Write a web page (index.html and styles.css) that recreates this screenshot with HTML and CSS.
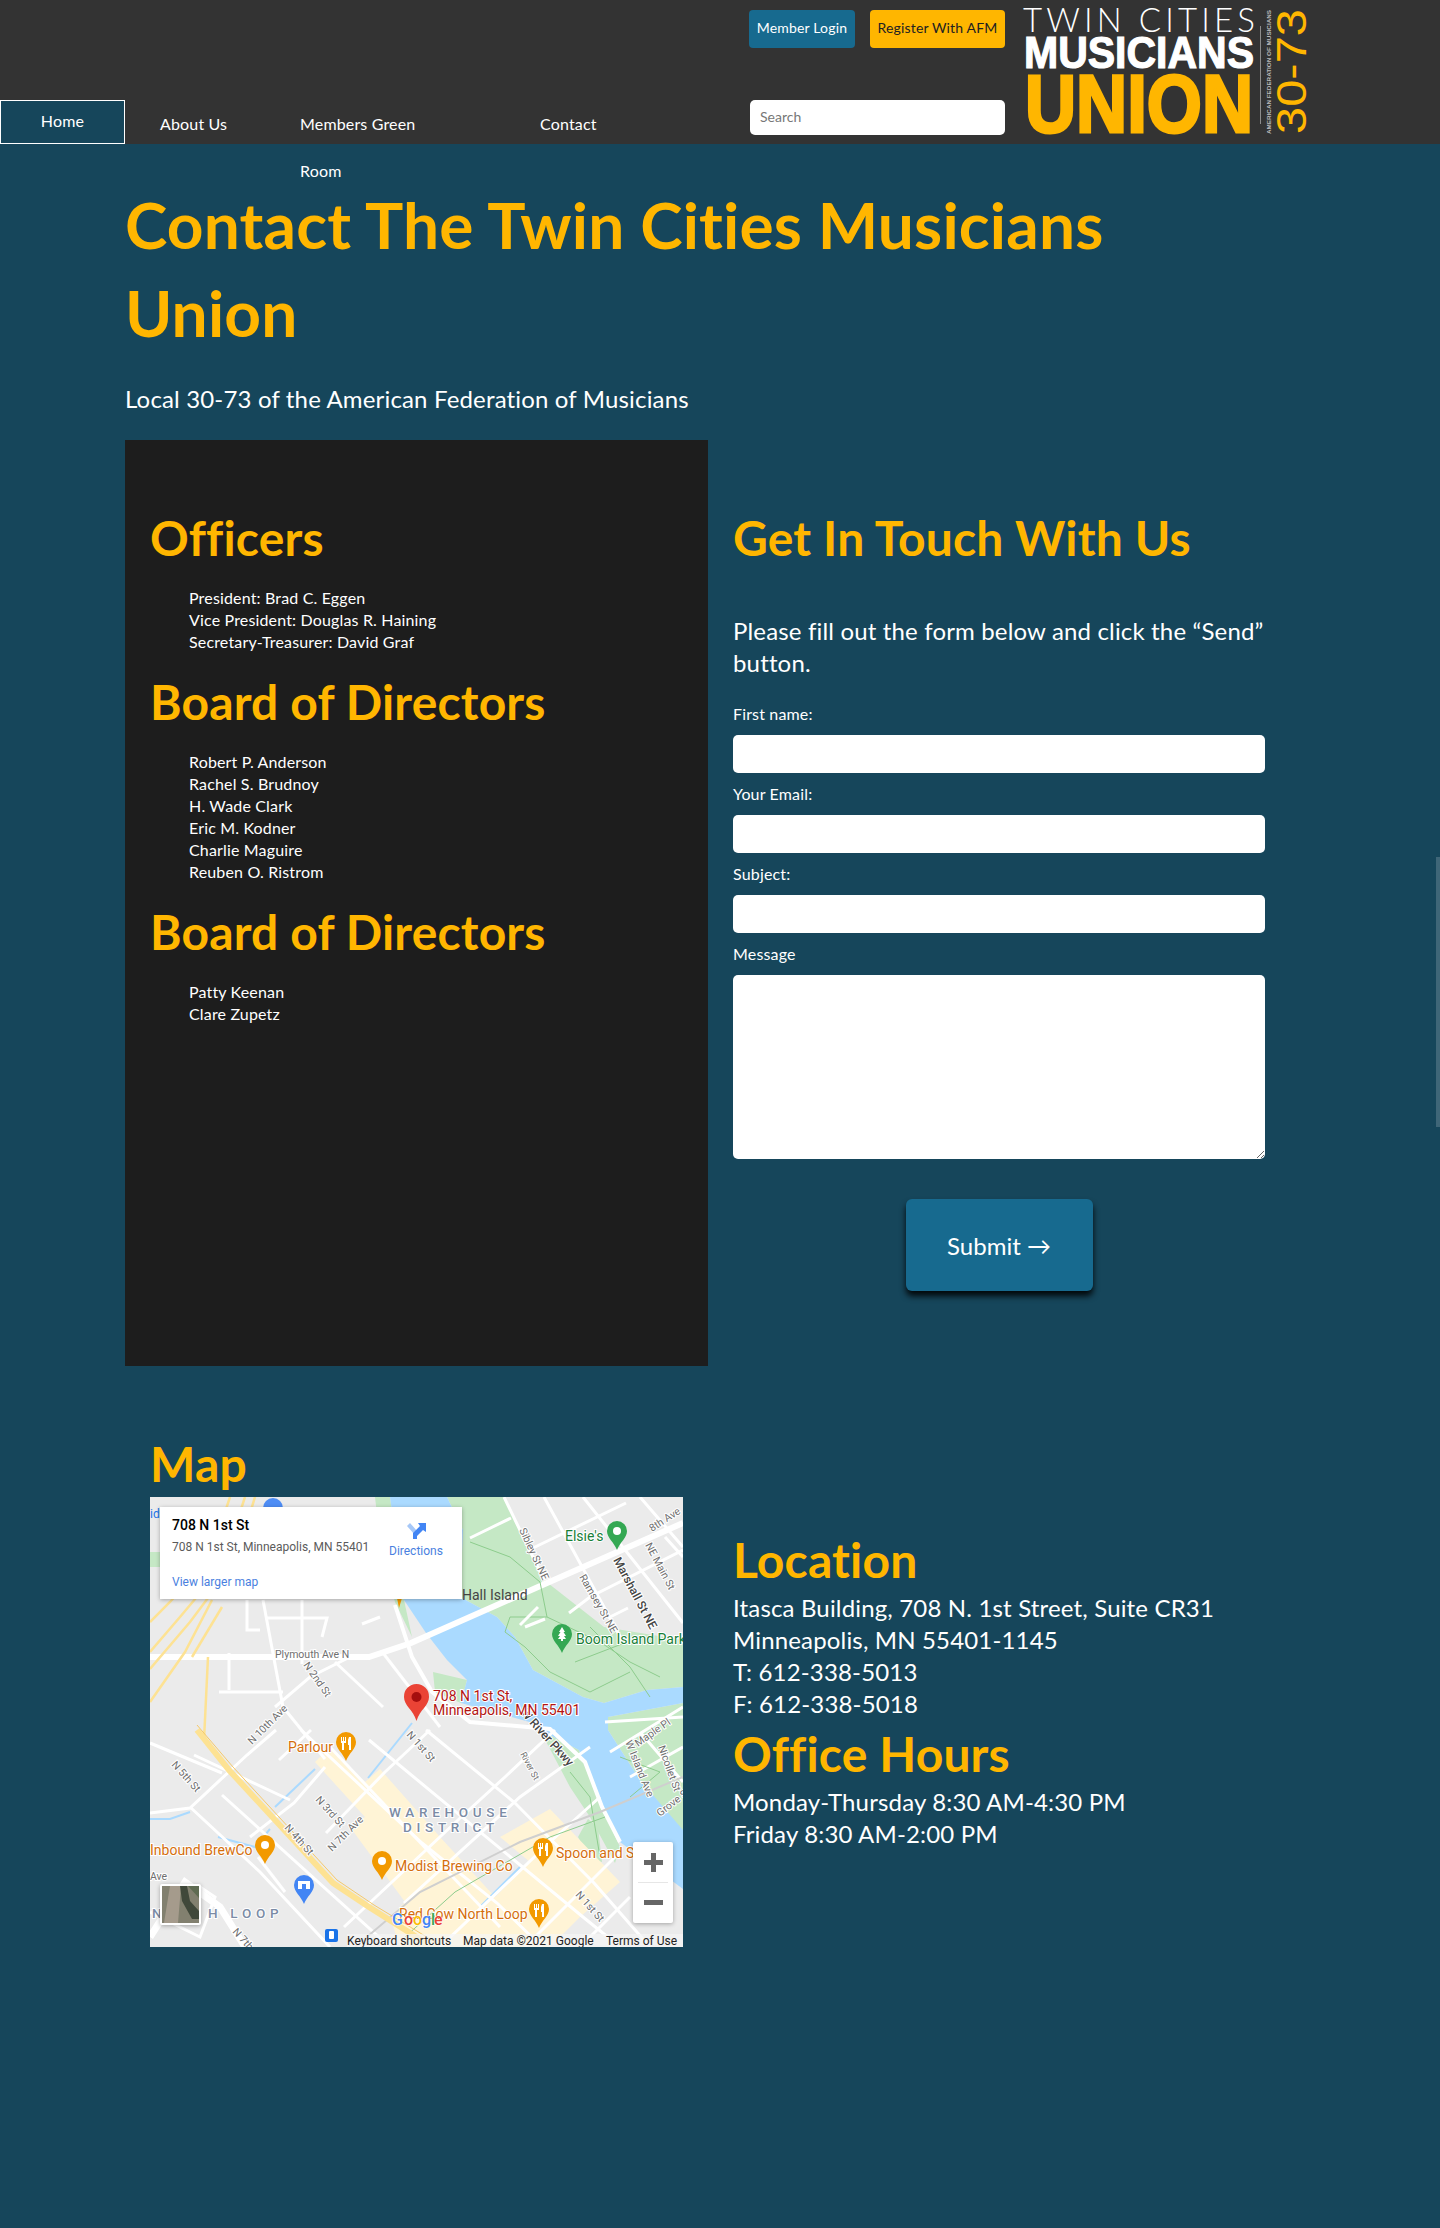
FILE: index.html
```html
<!DOCTYPE html>
<html lang="en">
<head>
<meta charset="utf-8">
<title>Contact The Twin Cities Musicians Union</title>
<link rel="stylesheet" href="styles.css">
</head>
<body>
<header class="site-header">
  <nav class="main-nav">
    <a class="nav-link nav-home" href="#">Home</a>
    <a class="nav-link nav-about" href="#">About Us</a>
    <a class="nav-link nav-members" href="#">Members Green Room</a>
    <a class="nav-link nav-contact" href="#">Contact</a>
  </nav>
  <div class="header-tools">
    <div class="tool-buttons">
      <a class="btn-small btn-blue" href="#">Member Login</a>
      <a class="btn-small btn-amber" href="#">Register With AFM</a>
    </div>
    <input class="search" type="text" placeholder="Search">
  </div>
  <svg class="logo" viewBox="0 0 284 126" width="284" height="126" role="img" aria-label="Twin Cities Musicians Union 30-73">
    <text class="logo-twin" x="0" y="24" textLength="232" lengthAdjust="spacing">TWIN CITIES</text>
    <text class="logo-musicians" x="1" y="60" textLength="230" lengthAdjust="spacingAndGlyphs">MUSICIANS</text>
    <text class="logo-union" x="2" y="124" textLength="228" lengthAdjust="spacingAndGlyphs">UNION</text>
    <rect x="237" y="18" width="1" height="98" fill="#8d8d8d"/>
    <text class="logo-afm" transform="translate(248 126) rotate(-90)" textLength="124" lengthAdjust="spacingAndGlyphs">AMERICAN FEDERATION OF MUSICIANS</text>
    <text class="logo-num" transform="translate(283 126) rotate(-90)" textLength="125" lengthAdjust="spacingAndGlyphs">30-73</text>
  </svg>
</header>

<main class="page">
  <h1 class="page-title">Contact The Twin Cities Musicians Union</h1>
  <p class="page-sub">Local 30-73 of the American Federation of Musicians</p>

  <div class="two-col top-row">
    <section class="panel">
      <h2 class="heading first">Officers</h2>
      <ul class="people">
        <li>President: Brad C. Eggen</li>
        <li>Vice President: Douglas R. Haining</li>
        <li>Secretary-Treasurer: David Graf</li>
      </ul>
      <h2 class="heading">Board of Directors</h2>
      <ul class="people">
        <li>Robert P. Anderson</li>
        <li>Rachel S. Brudnoy</li>
        <li>H. Wade Clark</li>
        <li>Eric M. Kodner</li>
        <li>Charlie Maguire</li>
        <li>Reuben O. Ristrom</li>
      </ul>
      <h2 class="heading">Board of Directors</h2>
      <ul class="people">
        <li>Patty Keenan</li>
        <li>Clare Zupetz</li>
      </ul>
    </section>

    <section class="contact">
      <h2 class="heading first">Get In Touch With Us</h2>
      <p class="lead">Please fill out the form below and click the “Send” button.</p>
      <form class="form">
        <label class="field-label">First name:</label>
        <input class="field" type="text">
        <label class="field-label">Your Email:</label>
        <input class="field" type="text">
        <label class="field-label">Subject:</label>
        <input class="field" type="text">
        <label class="field-label">Message</label>
        <textarea class="field field-area"></textarea>
        <button class="submit" type="button">Submit →</button>
      </form>
    </section>
  </div>

  <div class="two-col bottom-row">
    <section class="map-col">
      <h2 class="heading map-heading">Map</h2>
      <svg class="map" viewBox="0 0 533 450" width="533" height="450" role="img" aria-label="Map of 708 N 1st St">
        <rect width="533" height="450" fill="#ebebeb"/>
        <!-- parks -->
        <path fill="#c5e8c5" d="M297 0H354L394 83 454 130 533 143V190L497 193 454 206 433 200 383 173 365 140 347 120 310 100 313 33Z"/>
        <path fill="#c5e8c5" d="M458 220L533 206V335L490 283 458 233Z"/>
        <path fill="#c5e8c5" d="M225 0H240L254 103 262 140 245 105 232 60Z"/>
        <path fill="#c5e8c5" d="M0 55H14V70H0Z"/>
        <path fill="#c5e8c5" d="M283 175L317 183 311 206 285 195Z"/>
        <path fill="#c5e8c5" d="M390 233L429 253 447 300 470 350 465 366 440 320 420 290Z"/>
        <path fill="#c5e8c5" d="M428 340L438 322 448 330 452 365 440 362Z"/>
        <!-- river -->
        <path fill="#aadaff" d="M240 0H297L313 33 310 100 347 120 365 140 383 173 433 200 454 206 497 193 533 190V206L458 220 458 233 490 283 533 333V392L470 345 447 300 429 253 390 233 383 226 311 206 317 183 297 163 276 136 254 103Z"/>
        <!-- warehouse district tint -->
        <path fill="#fff4d6" d="M165 265L180 250 215 285 230 272 290 340 345 400 380 365 350 340 400 312 470 385 430 420 400 450H250L240 420 255 405 200 330 215 320Z"/>
        <!-- canals -->
        <g fill="none" stroke="#aadaff" stroke-width="2">
          <path d="M0 322H20L40 315"/>
          <path d="M68 340L105 350 120 332"/>
          <path d="M125 310L165 272"/>
          <path d="M218 281L262 226"/>
          <path d="M330 410L370 370"/>
        </g>
        <!-- street grid -->
        <g fill="none" stroke="#fff" stroke-width="3">
          <path d="M151 233L272 346 347 406 392 450"/>
          <path d="M219 243L433 420 470 450"/>
          <path d="M276 233L365 306 444 386 500 450"/>
          <path d="M40 310L110 375 180 450"/>
          <path d="M0 246L72 276M44 258L140 303"/>
          <path d="M72 298L240 450"/>
          <path d="M180 250L350 430"/>
          <path d="M0 316L40 311 97 258 126 233"/>
          <path d="M129 263L161 233"/>
          <path d="M100 340L144 306 175 270"/>
          <path d="M176 336L235 275 280 233"/>
          <path d="M194 430L308 323 355 280 405 233"/>
          <path d="M254 406L370 300 440 250"/>
          <path d="M290 450L400 345 450 300"/>
          <path d="M375 450L470 355"/>
          <path d="M430 450L480 400"/>
          <path d="M135 395L108 360"/>
          <path d="M113 103L133 210 175 262"/>
          <path d="M152 103V167M79 156V193M69 195H133M115 121H177L172 140M97 103V133H110"/>
          <path d="M233 156L290 230"/>
          <path d="M185 165L233 210M125 210L160 180 200 160"/>
          <path d="M230 120L212 127"/>
          <path d="M0 415L50 440 65 400 50 390"/>
          <path d="M320 41L361 21M383 51L476 6M419 116L440 100 533 53M458 121L478 111"/>
          <path d="M354 0L394 83M394 0L472 143M433 0L533 126M490 0L533 50M515 40L533 60"/>
          <path d="M460 255L533 210M490 235L533 285M480 280L533 250"/>
          <path d="M455 225L533 220"/>
        </g>
        <path fill="none" stroke="#fff" stroke-width="7" d="M0 440L35 385 70 410 95 450"/>
        <!-- Plymouth and bridge -->
        <path fill="none" stroke="#fff" stroke-width="6" d="M0 160H219L261 146 533 26"/>
        <path fill="none" stroke="#fff" stroke-width="4" d="M245 108L262 160 282 195 320 225 400 232 435 265 452 310 470 345"/>
        <!-- trails -->
        <g fill="none" stroke="#8dcc8d" stroke-width="1">
          <path d="M320 45L360 60 390 85 397 120 450 145 480 165 510 180M397 120L360 120 355 135 375 150 400 175 440 195 480 175M440 130L480 170 500 200M425 165L490 140"/>
          <path d="M255 440L305 395 400 340 455 320M420 275L440 300 450 360"/>
          <path d="M470 260L510 275 480 300"/>
        </g>
        <path fill="none" stroke="#cfcfcf" stroke-width="2" d="M205 450L270 395 370 345 450 315 533 280"/>
        <path fill="none" stroke="#fff" stroke-width="3" d="M370 128L388 110M375 130L395 122"/>
        <!-- highway -->
        <g fill="none" stroke="#fde293" stroke-width="2.500">
          <path d="M105 0L85 65 40 125 0 172"/>
          <path d="M95 0L72 70 30 120 0 155"/>
          <path d="M80 0L60 60 20 105 0 125"/>
          <path d="M62 103L35 155 0 205"/>
          <path d="M58 160L54 243"/>
          <path d="M72 110L42 160"/>
        </g>
        <path fill="none" stroke="#fde293" stroke-width="6" d="M47 233L79 273 183 386 219 410 276 446"/>
        <path fill="none" stroke="#f5c96a" stroke-width="1" d="M47 228L83 270 187 383 224 408 285 445"/>
        <!-- street labels -->
        <g class="map-street">
          <text x="125" y="161">Plymouth Ave N</text>
          <text transform="translate(153 168) rotate(55)">N 2nd St</text>
          <text transform="translate(369 33) rotate(65)">Sibley St NE</text>
          <text transform="translate(429 80) rotate(60)">Ramsey St NE</text>
          <text class="map-street-dark" transform="translate(463 63) rotate(62)">Marshall St NE</text>
          <text transform="translate(495 48) rotate(62)">NE Main St</text>
          <text transform="translate(502 35) rotate(-33)">8th Ave</text>
          <text transform="translate(102 248) rotate(-45)">N 10th Ave</text>
          <text transform="translate(21 268) rotate(48)">N 5th St</text>
          <text transform="translate(165 303) rotate(48)">N 3rd St</text>
          <text transform="translate(134 331) rotate(48)">N 4th St</text>
          <text transform="translate(182 355) rotate(-45)">N 7th Ave</text>
          <text transform="translate(256 238) rotate(48)">N 1st St</text>
          <text class="map-street-dark" transform="translate(370 216) rotate(48)">W River Pkwy</text>
          <text class="map-street-small" transform="translate(370 257) rotate(62)">River St</text>
          <text transform="translate(475 245) rotate(68)">W Island Ave</text>
          <text transform="translate(488 250) rotate(-35)">Maple Pl</text>
          <text transform="translate(508 250) rotate(70)">Nicollet St</text>
          <text transform="translate(510 320) rotate(-38)">Grove St</text>
          <text transform="translate(425 398) rotate(48)">N 1st St</text>
          <text transform="translate(82 435) rotate(48)">N 7th</text>
          <text x="0" y="383">Ave</text>
        </g>
        <text class="map-place" x="312" y="103">Hall Island</text>
        <!-- green pins -->
        <path fill="#34a853" d="M467 24a10 10 0 0 1 10 10c0 7-7 11-10 19-3-8-10-12-10-19a10 10 0 0 1 10-10z"/>
        <circle cx="467" cy="34" r="4" fill="#fff"/>
        <text class="map-green" x="415" y="44">Elsie's</text>
        <path fill="#34a853" d="M412 127a10 10 0 0 1 10 10c0 7-7 11-10 19-3-8-10-12-10-19a10 10 0 0 1 10-10z"/>
        <path fill="#fff" d="M412 130l3 5h-1.500l2.500 4h-2l2 3h-3v2h-2v-2h-3l2-3h-2l2.500-4h-1.500z"/>
        <text class="map-green" x="426" y="147">Boom Island Park</text>
        <!-- red pin -->
        <path fill="#ea4335" d="M266.500 187a12.500 12.500 0 0 1 12.500 13c0 9-9 12-12.500 24-3.500-12-12.500-15-12.500-24a12.500 12.500 0 0 1 12.500-13z"/>
        <circle cx="266.500" cy="200" r="5" fill="#a50e0e"/>
        <text class="map-red" x="283" y="204">708 N 1st St,</text>
        <text class="map-red" x="283" y="218">Minneapolis, MN 55401</text>
        <!-- orange pins -->
        <g fill="#f29900">
          <path d="M196 235a10 10 0 0 1 10 10c0 7-7 11-10 19-3-8-10-12-10-19a10 10 0 0 1 10-10z"/>
          <path d="M115 338a10 10 0 0 1 10 10c0 7-7 11-10 19-3-8-10-12-10-19a10 10 0 0 1 10-10z"/>
          <path d="M232 354a10 10 0 0 1 10 10c0 7-7 11-10 19-3-8-10-12-10-19a10 10 0 0 1 10-10z"/>
          <path d="M393 341a10 10 0 0 1 10 10c0 7-7 11-10 19-3-8-10-12-10-19a10 10 0 0 1 10-10z"/>
          <path d="M389 402a10 10 0 0 1 10 10c0 7-7 11-10 19-3-8-10-12-10-19a10 10 0 0 1 10-10z"/>
        </g>
        <g fill="#fff">
          <circle cx="115" cy="348" r="4"/>
          <circle cx="232" cy="364" r="4"/>
          <path d="M191 240h1v4h1v-4h1v4h1v-4h1v6h-2v7h-2v-7h-1zM199 240h2v13h-2v-5h-1v-5z"/>
          <path d="M388 346h1v4h1v-4h1v4h1v-4h1v6h-2v7h-2v-7h-1zM396 346h2v13h-2v-5h-1v-5z"/>
          <path d="M384 407h1v4h1v-4h1v4h1v-4h1v6h-2v7h-2v-7h-1zM392 407h2v13h-2v-5h-1v-5z"/>
        </g>
        <text class="map-orange" x="138" y="255">Parlour</text>
        <text class="map-orange" x="0" y="358">Inbound BrewCo</text>
        <text class="map-orange" x="245" y="374">Modist Brewing Co</text>
        <text class="map-orange" x="406" y="361">Spoon and S</text>
        <text class="map-orange" x="249" y="422">Red Cow North Loop</text>
        <!-- transit pin -->
        <path fill="#4285f4" d="M154 378a10 10 0 0 1 10 10c0 7-7 11-10 19-3-8-10-12-10-19a10 10 0 0 1 10-10z"/>
        <rect x="148" y="384" width="12" height="8" fill="#fff"/>
        <rect x="152" y="387" width="4" height="5" fill="#4285f4"/>
        <!-- area labels -->
        <text class="map-area" x="239" y="320">WAREHOUSE</text>
        <text class="map-area" x="253" y="335">DISTRICT</text>
        <text class="map-area" x="2" y="421">N</text>
        <text class="map-area" x="58" y="421">H LOOP</text>
        <!-- top pin under the card -->
        <circle cx="123" cy="11" r="10" fill="#4e8df5"/>
        <text class="map-link-cut" x="0" y="21">id</text>
        <!-- info card -->
        <path d="M252 101l-3 10-2-10z" fill="#f29900"/>
        <rect class="map-card" x="10" y="10" width="302" height="92" fill="#fff"/>
        <text class="map-card-title" x="22" y="33">708 N 1st St</text>
        <text class="map-card-text" x="22" y="54">708 N 1st St, Minneapolis, MN 55401</text>
        <text class="map-card-link" x="22" y="89">View larger map</text>
        <path fill="#a6c8f8" d="M257 29l3-3 8 9-3 3z"/>
        <path fill="#4285f4" d="M263 42v-6l7-7-2-3h8v9l-3-2-6 6v3z"/>
        <text class="map-card-link" x="239" y="58">Directions</text>
        <!-- satellite thumbnail -->
        <rect class="map-card" x="10" y="387" width="41" height="41" fill="#fff" rx="2"/>
        <rect x="12" y="389" width="37" height="37" fill="#82806f"/>
        <path d="M20 389l-6 37h14l3-37z" fill="#a59b8c"/>
        <path d="M30 389l2 15 10 18h7v-8l-9-10-3-15z" fill="#40483a"/>
        <path d="M38 389h11v12z" fill="#5f6b52"/>
        <!-- zoom control -->
        <rect class="map-card" x="483" y="345" width="40" height="81" fill="#fff" rx="2"/>
        <rect x="488" y="385" width="30" height="1" fill="#e6e6e6"/>
        <path fill="#666" d="M494 363h7v-7h5v7h7v5h-7v7h-5v-7h-7zM494 403h19v5h-19z"/>
        <!-- google mark -->
        <g class="map-google">
          <text x="242" y="428" fill="#4285f4">G</text><text x="254" y="428" fill="#ea4335">o</text><text x="263" y="428" fill="#fbbc04">o</text><text x="272" y="428" fill="#4285f4">g</text><text x="281" y="428" fill="#34a853">l</text><text x="284" y="428" fill="#ea4335">e</text>
        </g>
        <!-- attribution -->
        <rect x="197" y="437" width="336" height="13" fill="#f5f5f5" opacity=".7"/>
        <rect x="175" y="432" width="13" height="13" rx="2" fill="#1a73e8"/>
        <rect x="179" y="434" width="5" height="8" rx="1" fill="#fff"/>
        <text class="map-attr" x="197" y="448">Keyboard shortcuts</text>
        <text class="map-attr" x="313" y="448">Map data ©2021 Google</text>
        <text class="map-attr" x="456" y="448">Terms of Use</text>
      </svg>
    </section>
    <section class="info">
      <h2 class="heading info-first">Location</h2>
      <p class="info-text">Itasca Building, 708 N. 1st Street, Suite CR31<br>Minneapolis, MN 55401-1145<br>T: 612-338-5013<br>F: 612-338-5018</p>
      <h2 class="heading info-next">Office Hours</h2>
      <p class="info-text">Monday-Thursday 8:30 AM-4:30 PM<br>Friday 8:30 AM-2:00 PM</p>
    </section>
  </div>
</main>
<div class="scroll-thumb"></div>
</body>
</html>
```

FILE: styles.css
```css
* { box-sizing: border-box; }
html, body { margin: 0; padding: 0; }
body {
  position: relative;
  min-height: 2228px;
  background: #16465b;
  color: #fff;
  font-family: "Lato", "Noto Sans", sans-serif;
  letter-spacing: .01em;
  overflow: hidden;
}
.site-header {
  display: flex;
  align-items: flex-start;
  height: 144px;
  background: #333;
}
.main-nav {
  display: flex;
  align-items: flex-end;
  width: 750px;
  height: 144px;
}
.nav-link {
  color: #fff;
  text-decoration: none;
  font-size: 16px;
  height: 44px;
  line-height: 47px;
}
.nav-home {
  width: 125px;
  margin-right: 35px;
  border: 1px solid #fff;
  background: #16465b;
  text-align: center;
  line-height: 40px;
}
.nav-about { width: 72px; }
.nav-members { width: 160px; margin-left: 68px; }
.nav-contact { margin-left: 80px; }
.header-tools {
  display: flex;
  flex-direction: column;
  justify-content: space-between;
  width: 255px;
  height: 135px;
  padding-top: 10px;
}
.tool-buttons { display: flex; gap: 15px; }
.btn-small {
  display: block;
  height: 38px;
  line-height: 36px;
  border-radius: 4px;
  font-size: 14px;
  text-align: center;
  text-decoration: none;
}
.btn-blue { width: 106px; margin-left: -1px; background: #176a8f; color: #fff; }
.btn-amber { width: 135px; background: #ffb600; color: #222; }
.search {
  width: 255px;
  height: 35px;
  border: 0;
  border-radius: 5px;
  padding: 0 10px 2px;
  background: #fff;
  font: 14px "Lato", "Noto Sans", sans-serif;
}
.search::placeholder { color: #777; }
.logo { margin: 8px 0 0 18px; flex: none; overflow: visible; letter-spacing: 0; }
.logo text { font-family: "Liberation Sans", sans-serif; }
.logo .logo-twin { font-family: "Lato", sans-serif; font-size: 33px; fill: #fff; font-weight: 300; }
.logo-musicians { font-size: 44px; fill: #fff; font-weight: 700; stroke: #fff; stroke-width: 1.200px; }
.logo-union { font-size: 82px; fill: #ffb600; font-weight: 700; stroke: #ffb600; stroke-width: 3px; }
.logo-afm { font-size: 6px; fill: #bbb; font-weight: 700; }
.logo-num { font-size: 42px; fill: #ffb600; }

.page { padding: 37px 0 0 125px; width: 1291px; }
.page-title {
  margin: 0;
  max-width: 1100px;
  font-size: 64px;
  line-height: 88px;
  font-weight: 700;
  color: #ffb600;
}
.page-sub {
  margin: 26px 0 25px;
  font-size: 24px;
  line-height: 32px;
}
.two-col { display: grid; grid-template-columns: 583px 583px; }
.top-row { height: 926px; }
.panel {
  background: #1d1d1d;
  padding: 66px 25px 0;
}
.contact { padding: 66px 25px 0; }
.heading {
  margin: 17px 0 0;
  font-size: 48px;
  line-height: 64px;
  font-weight: 700;
  color: #ffb600;
}
.heading.first { margin-top: 0; }
.people {
  list-style: none;
  margin: 17px 0 0;
  padding: 0 0 0 39px;
  font-size: 16px;
  line-height: 22px;
}
.lead {
  margin: 45px 0 0;
  width: 532px;
  font-size: 24px;
  line-height: 32px;
}
.form { width: 532px; margin-top: 24px; }
.field-label {
  display: block;
  font-size: 16px;
  line-height: 21px;
  margin-bottom: 11px;
}
.field {
  display: block;
  width: 100%;
  height: 38px;
  margin: 0 0 10px;
  border: 0;
  border-radius: 5px;
  background: #fff;
}
.field-area { height: 184px; margin-bottom: 40px; }
.submit {
  display: block;
  width: 187px;
  height: 92px;
  margin: 0 auto;
  border: 0;
  border-radius: 6px;
  background: #176a8f;
  color: #fff;
  font: 24px "Lato", "Noto Sans", sans-serif;
  box-shadow: 0 5px 6px rgba(0, 0, 0, .9);
}
.bottom-row { padding-top: 66px; }
.map-col { padding-left: 25px; }
.map-heading { margin: 0 0 1px; }
.map { display: block; letter-spacing: 0; }
.map text { font-family: "Roboto", sans-serif; }
.map-street { font-size: 10.500px; fill: #6f6f6f; paint-order: stroke; stroke: #fff; stroke-width: 2px; }
.map-street-dark { fill: #444; font-size: 12px; font-weight: 500; }
.map-street-small { font-size: 9px; }
.map-place { font-size: 14px; fill: #444; }
.map-green { font-size: 14px; fill: #188038; paint-order: stroke; stroke: #fff; stroke-width: 2px; }
.map-red { font-size: 14px; fill: #b31412; paint-order: stroke; stroke: #fff; stroke-width: 2px; }
.map-orange { font-size: 14px; fill: #d56e0c; paint-order: stroke; stroke: #fff; stroke-width: 2px; }
.map-area { font-size: 13.500px; font-weight: 500; letter-spacing: 4.700px; fill: #7b8ba5; paint-order: stroke; stroke: #fff; stroke-width: 2px; }
.map-card { filter: drop-shadow(0 1px 2px rgba(0, 0, 0, .3)); }
.map-card-title { font-size: 14px; font-weight: 500; fill: #000; }
.map-card-text { font-size: 12px; fill: #5b5b5b; }
.map-card-link { font-size: 12px; fill: #4a7fe0; }
.map-link-cut { font-size: 12px; fill: #1a73e8; }
.map-google { font-size: 16px; font-weight: 500; paint-order: stroke; stroke: #fff; stroke-width: 1px; }
.map-attr { font-size: 12px; fill: #222; }
.info { padding: 96px 25px 0; }
.info-first { margin-top: 0; }
.info-next { margin-top: 2px; }
.info-text { margin: 0; font-size: 24px; line-height: 32px; }
.scroll-thumb {
  position: absolute;
  top: 857px;
  right: 0;
  width: 4px;
  height: 270px;
  background: #3f6678;
}
```
